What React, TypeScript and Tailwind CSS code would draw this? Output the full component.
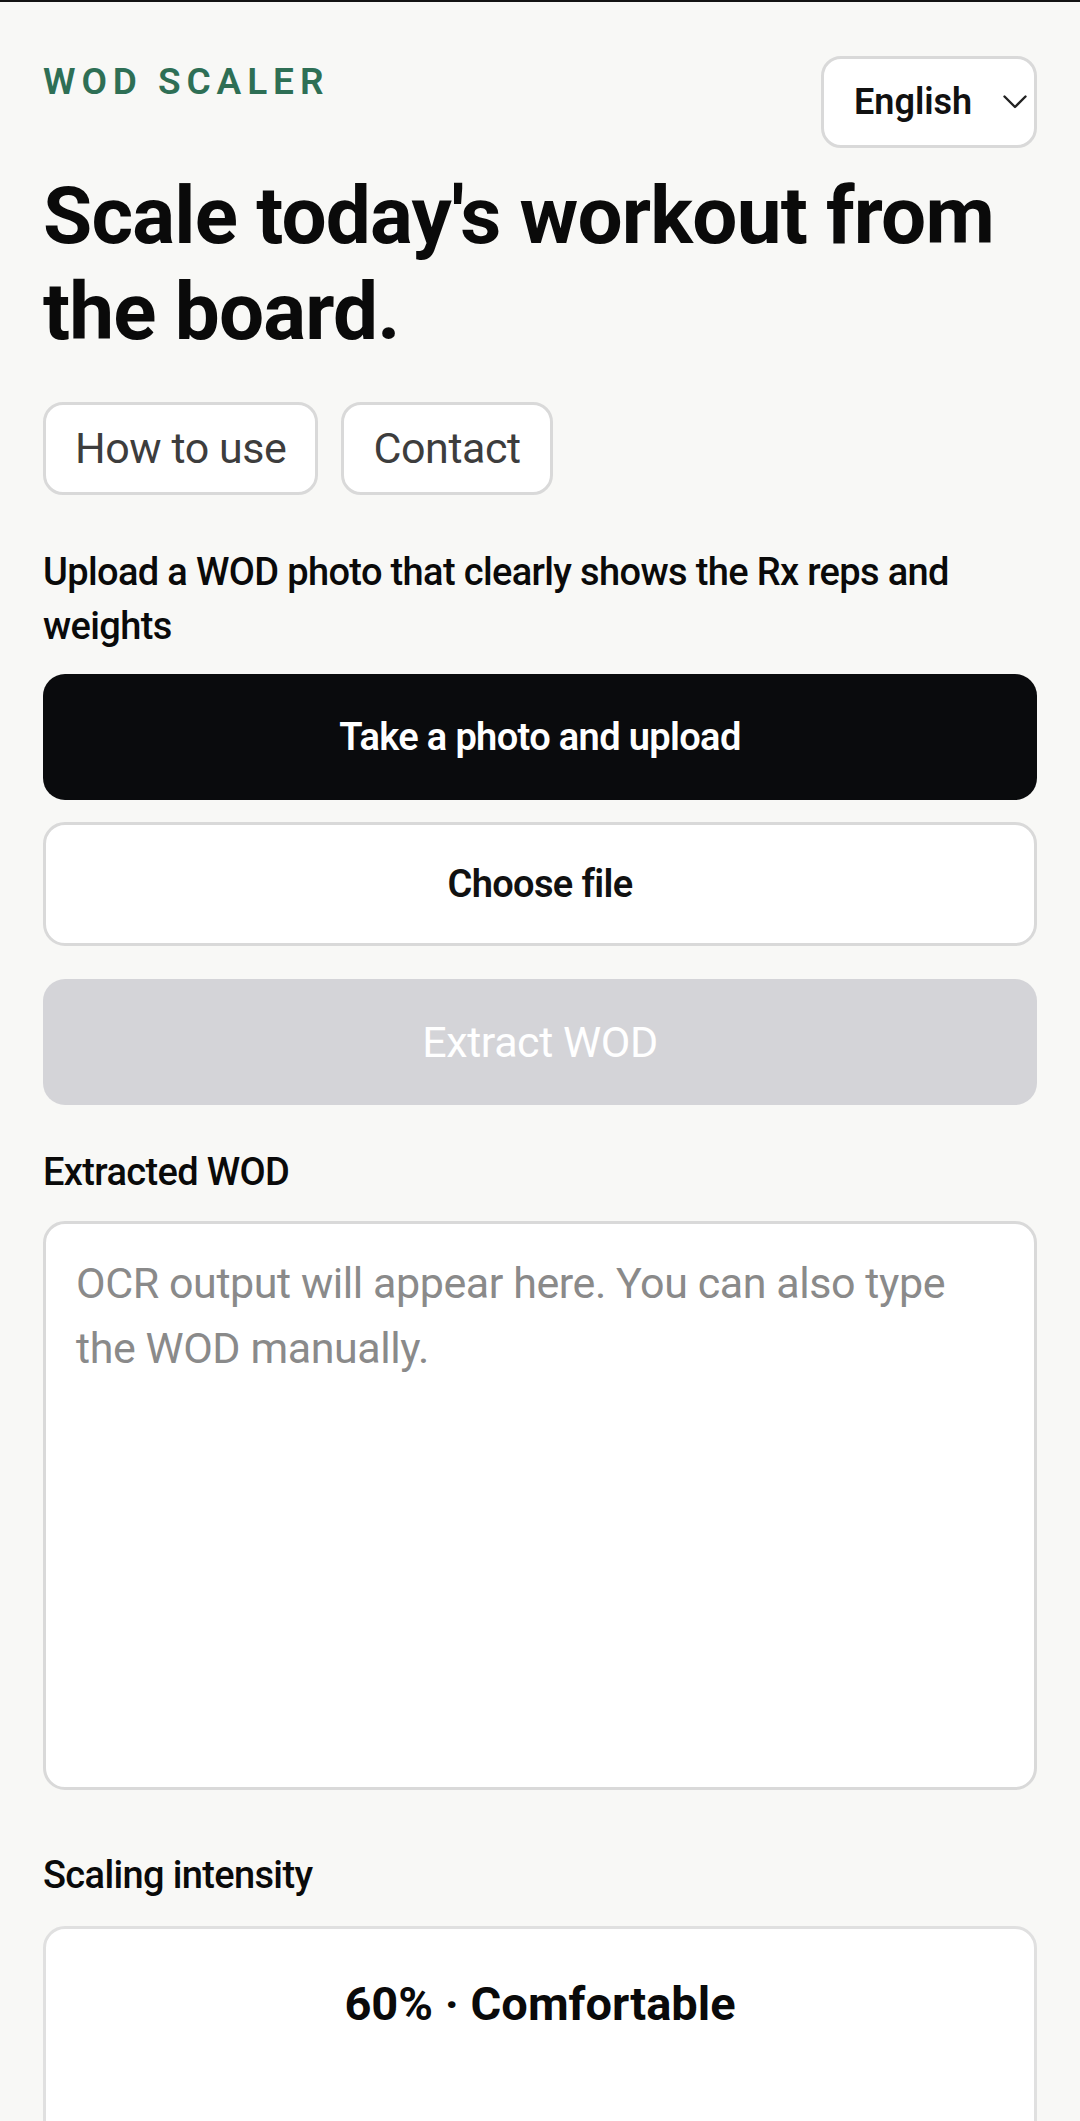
import React from "react";

export default function App() {
  return (
    <div
      className="min-h-[2121px] bg-[#f8f8f6] text-[#0a0a0a]"
      style={{ fontFamily: "Roboto, 'Noto Sans', sans-serif" }}
    >
      <div className="h-[2px] bg-[#141414]" />
      <div className="px-[43px] pt-[54px] pb-[60px]">
        <div className="flex items-start justify-between">
          <div className="pt-[1px] text-[37px] leading-[50px] font-semibold tracking-[0.16em] text-[#2e6f55]">
            WOD SCALER
          </div>
          <div className="flex h-[92px] w-[216px] items-center justify-between rounded-[20px] border-[3px] border-[#d9d9d9] bg-white pl-[30px] pr-[7px]">
            <span className="text-[36px] font-semibold text-[#111]">English</span>
            <svg width="24" height="14" viewBox="0 0 24 14" fill="none">
              <path d="M1.5 1.5 L12 12 L22.5 1.5" stroke="#222" strokeWidth="2.4" strokeLinecap="round" strokeLinejoin="round" />
            </svg>
          </div>
        </div>

        <h1 className="mt-[20px] text-[80px] leading-[96px] font-bold tracking-[-0.01em] text-[#0a0a0a]">
          Scale today's workout from the board.
        </h1>

        <div className="mt-[42px] flex gap-[23px]">
          <button className="h-[93px] rounded-[20px] border-[3px] border-[#d9d9d9] bg-white px-[29px] text-[43px] tracking-[-0.01em] text-[#3d3d3d]">
            How to use
          </button>
          <button className="h-[93px] rounded-[20px] border-[3px] border-[#d9d9d9] bg-white px-[29px] text-[43px] tracking-[-0.01em] text-[#3d3d3d]">
            Contact
          </button>
        </div>

        <p className="mt-[50px] text-[38px] leading-[54px] font-medium tracking-[-0.017em] text-[#0a0a0a]">
          Upload a WOD photo that clearly shows the Rx reps and weights
        </p>

        <button className="mt-[21px] flex h-[126px] w-full items-center justify-center rounded-[22px] bg-[#0a0b0d] text-[38px] font-semibold tracking-[-0.017em] text-white">
          Take a photo and upload
        </button>
        <button className="mt-[22px] flex h-[124px] w-full items-center justify-center rounded-[22px] border-[3px] border-[#d9d9d9] bg-white text-[38px] font-semibold tracking-[-0.017em] text-[#111]">
          Choose file
        </button>
        <button className="mt-[33px] flex h-[126px] w-full items-center justify-center rounded-[22px] bg-[#d4d4d8] text-[43px] tracking-[-0.01em] text-white">
          Extract WOD
        </button>

        <div className="mt-[40px] text-[38px] leading-[54px] font-medium tracking-[-0.017em] text-[#0a0a0a]">
          Extracted WOD
        </div>
        <textarea
          className="mt-[22px] block h-[569px] w-full resize-none rounded-[22px] border-[3px] border-[#d9d9d9] bg-white px-[30px] pt-[27px] text-[43px] leading-[65px] tracking-[-0.01em] text-[#111] outline-none placeholder:text-[#8a8a8a]"
          placeholder="OCR output will appear here. You can also type the WOD manually."
        />

        <div className="mt-[58px] text-[38px] leading-[54px] font-medium tracking-[-0.017em] text-[#0a0a0a]">
          Scaling intensity
        </div>
        <div className="mt-[24px] h-[320px] rounded-[22px] border-[3px] border-[#e0e0e0] bg-white pt-[37px] text-center">
          <div className="text-[47px] leading-[75px] font-bold text-[#0a0a0a]">
            60% · Comfortable
          </div>
        </div>
      </div>
    </div>
  );
}
